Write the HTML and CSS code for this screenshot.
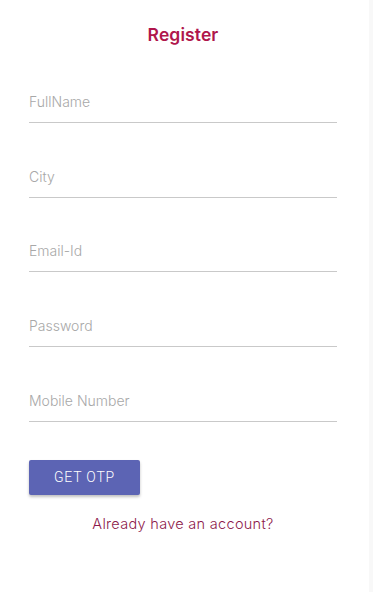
FILE: index.html
```html
<!DOCTYPE html>
<html lang="en">
<head>
<meta charset="utf-8">
<title>Register</title>
<link rel="stylesheet" href="styles.css">
</head>
<body>
<main class="page">
  <h1 class="title">Register</h1>
  <form class="form">
    <label class="field"><span class="field-label">FullName</span></label>
    <label class="field"><span class="field-label">City</span></label>
    <label class="field"><span class="field-label">Email-Id</span></label>
    <label class="field"><span class="field-label">Password</span></label>
    <label class="field"><span class="field-label">Mobile Number</span></label>
    <div class="actions">
      <button type="button" class="btn">GET OTP</button>
    </div>
    <p class="login-link">Already have an account?</p>
  </form>
</main>
</body>
</html>
```
FILE: styles.css
```css
html, body {
  margin: 0;
  padding: 0;
  overflow: hidden;
}
body {
  background: #f8f8f8;
  font-family: Inter, "Open Sans", "Liberation Sans", sans-serif;
}
.page {
  width: 369px;
  height: 592px;
  background: #ffffff;
  box-sizing: border-box;
  padding: 22px 32px 0 29px;
}
.title {
  margin: 0;
  text-align: center;
  font-size: 17.5px;
  line-height: 26px;
  font-weight: 600;
  color: #b0164c;
  letter-spacing: 0.1px;
}
.form {
  display: flex;
  flex-direction: column;
  margin-top: 1px;
}
.field {
  display: flex;
  align-items: flex-end;
  height: 74.7px;
  box-sizing: border-box;
  border-bottom: 1px solid #c9c9c9;
  padding-bottom: 10px;
}
.field:first-child {
  height: 74px;
}
.field-label {
  font-size: 14px;
  font-weight: 300;
  color: #a8a8a8;
  line-height: 20px;
}
.actions {
  margin-top: 38px;
  display: flex;
}
.btn {
  width: 111px;
  height: 35px;
  border: none;
  border-radius: 2px;
  background: #5c64b4;
  color: #ffffff;
  font-family: Roboto, "Liberation Sans", sans-serif;
  font-size: 14px;
  font-weight: 300;
  letter-spacing: 0.8px;
  box-shadow: 0 2px 3px rgba(0, 0, 0, 0.25);
  padding: 0;
}
.login-link {
  margin: 19px 0 0 0;
  text-align: center;
  font-size: 14.5px;
  font-weight: 300;
  color: #8e1a4c;
  line-height: 20px;
  letter-spacing: 0.3px;
}
```
